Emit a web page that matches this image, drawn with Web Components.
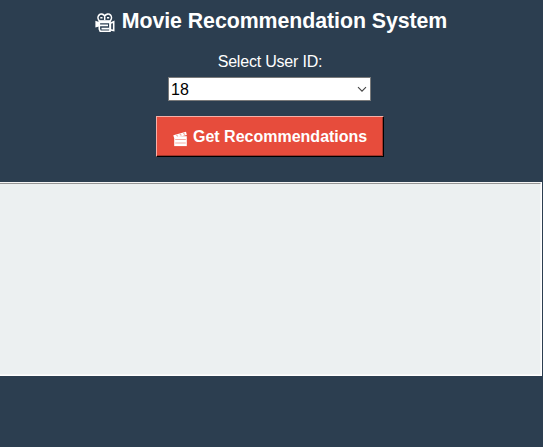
<!DOCTYPE html>
<html lang="en"><head><meta charset="utf-8"><title>Movie Recommendation System</title>
<style>
html,body{margin:0;width:543px;height:447px;overflow:hidden;background:#2c3e50}
body{font-family:"Liberation Sans",Arial,sans-serif;color:#fff}
</style></head><body>
<movie-app></movie-app>
<script>
function define(name, html){
  customElements.define(name, class extends HTMLElement{
    constructor(){super();this.attachShadow({mode:'open'}).innerHTML=html;}
  });
}
define('camera-icon', `<style>:host{display:block;width:20px;height:20px}svg{display:block}</style>
<svg width="20" height="20" viewBox="0 0 20 20" fill="none" stroke="#fff" stroke-width="1.6">
<path d="M9.7 3.2C8.5.8 5.6.4 4 2.1 2.3 4 3 6.6 4.5 8H15c1.5-1.4 2.1-4 .5-5.9C13.9.4 11 .8 9.7 3.2z"/>
<path d="M5.3 4.8h2.2M12 4.8h2.2M9.7 4v3" stroke-width="1.5"/>
<path d="M4.3 8.6H15V18.2H5.2L4.3 16z"/><path d="M.4 7.8L4 9v4.4L.4 14.4z" fill="#fff" stroke="none"/><path d="M15.4 10.3l3.3-1.6v8.8l-3.3-.6z"/>
<path d="M4 9.3h11M4 12.4h4M8 12.4h5M6.5 15.6h8" stroke-width="1.9"/></svg>`);
define('clapper-icon', `<style>:host{display:block;width:15px;height:16px}svg{display:block}</style>
<svg width="15" height="16" viewBox="0 0 15 16"><path d="M.3 4.2L13 .8l.8 3.1L1.1 7z" fill="#fff"/><path d="M1.2 5.2H13.8v9.9H1.2z" fill="#fff"/>
<path d="M3.3 3.8l1.6 1.6M6.8 2.9l1.6 1.6M10.3 2l1.6 1.6M2.2 8.5h10.6M2.2 12h10.6" stroke="#f4aaa2" stroke-width="1.1"/></svg>`);
define('app-title', `<style>:host{display:flex;height:24px;gap:7px;align-items:flex-start}h1{margin:0;font-size:21.33px;letter-spacing:-.06px;line-height:24px;font-weight:700;white-space:nowrap}camera-icon{margin-top:4px}</style>
<camera-icon></camera-icon><h1><slot></slot></h1>`);
define('user-select', `<style>:host{display:flex;box-sizing:border-box;width:203px;height:24px;border:1px solid #7a7a7a;background:#fff;color:#000;font-size:16px;line-height:23px;padding:0 3px 0 2px;justify-content:space-between;align-items:center}svg{display:block;margin-top:1px}</style>
<span><slot></slot></span><svg width="10" height="7" viewBox="0 0 10 7" fill="none" stroke="#444" stroke-width="1.1"><path d="M1 1.2l4 4 4-4"/></svg>`);
define('raised-button', `<style>:host{display:flex;box-sizing:border-box;width:228px;height:41px;border:1px solid;border-color:#f5b0a8 #000 #000 #f5b0a8;box-shadow:inset -1px -1px #a33529;background:#e74c3c;padding:0 0 0 16px;gap:5px;font-weight:700;font-size:16px;line-height:40px;white-space:nowrap}clapper-icon{margin-top:14px}</style>
<clapper-icon></clapper-icon><span><slot></slot></span>`);
define('result-panel', `<style>:host{display:block;box-sizing:border-box;width:542px;height:194px;background:#ecf0f1;border-top:1px solid #f4f4f4;border-right:1px solid #fff;border-bottom:1px solid #fff;}
div{height:100%;box-sizing:border-box;border-top:1px solid #969696;border-right:1px solid #f7f7f7;border-bottom:1px solid #f7f7f7}</style><div><slot></slot></div>`);
define('movie-app', `<style>:host{display:flex;flex-direction:column;height:447px}
header{display:flex;flex-direction:column;align-items:center;width:539px;height:182px;box-sizing:border-box;padding-top:9px}
label{font-size:16px;line-height:20px;letter-spacing:-.2px;margin-top:19px;margin-bottom:5px;margin-left:1px}app-title{margin-left:3px}raised-button{margin-top:15px;margin-left:1px}</style>
<header><app-title>Movie Recommendation System</app-title><label>Select User ID:</label><user-select>18</user-select><raised-button>Get Recommendations</raised-button></header><result-panel></result-panel>`);
</script></body></html>
